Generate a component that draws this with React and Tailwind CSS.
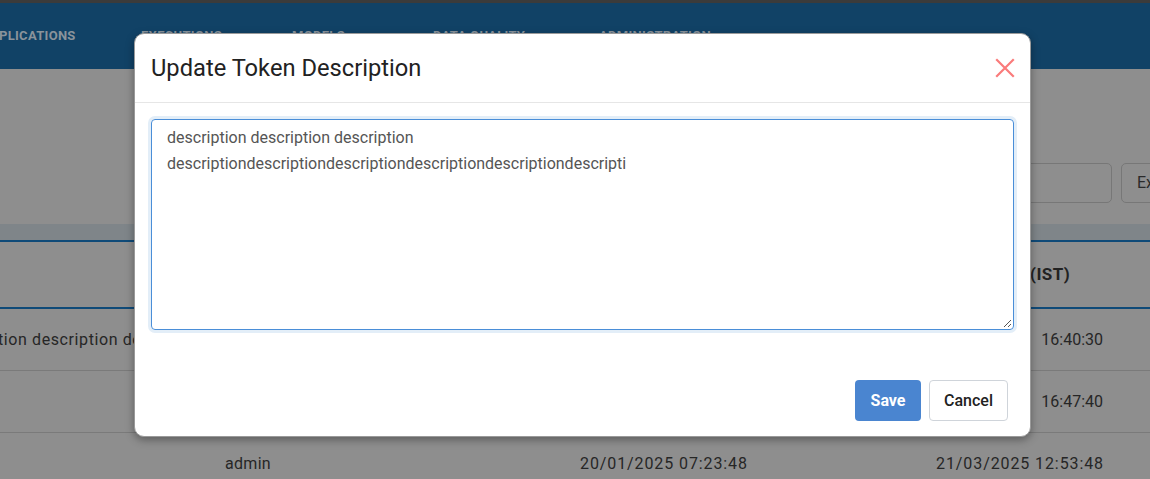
import React from "react";

export default function App() {
  const font = { fontFamily: "Roboto, 'Liberation Sans', sans-serif" };
  return (
    <div className="relative w-[1150px] h-[479px] overflow-hidden bg-[#8e8e8e]" style={font}>
      {/* top strip */}
      <div className="h-[3px] bg-[#3b3b3b]" />
      {/* navbar */}
      <div className="h-[66px] bg-[#114266] flex items-center text-[13px] font-bold text-[#8a939b] tracking-[0.3px]">
        <span className="ml-[-1px] w-[142px]">PLICATIONS</span>
        <span className="w-[151px]">EXECUTIONS</span>
        <span className="w-[141px]">MODELS ▾</span>
        <span className="w-[166px]">DATA QUALITY</span>
        <span>ADMINISTRATION</span>
      </div>
      {/* toolbar area */}
      <div className="h-[155px] relative">
        <div className="absolute left-[980px] top-[94px] w-[132px] h-[40px] border border-[#777] rounded-[5px]" />
        <div className="absolute left-[1121px] top-[94px] w-[60px] h-[40px] border border-[#777] rounded-[5px] flex items-center pl-[15px] text-[16px] text-[#2a2a2a]">Ex</div>
      </div>
      <div className="h-[16px] bg-[#7f8589]" />
      {/* table header */}
      <div className="h-[69px] border-t-2 border-b-2 border-[#0f4a78] flex items-center justify-end pr-[80px] text-[17px] font-bold text-[#222] tracking-[0.4px]">
        <span>(IST)</span>
      </div>
      {/* rows */}
      <div className="h-[62px] border-b border-[#7a7a7a] flex items-center text-[16px] text-[#262626]">
        <span className="ml-[-2px] tracking-[0.6px]">tion description description description</span>
        <span className="ml-auto mr-[47px]">16:40:30</span>
      </div>
      <div className="h-[62px] border-b border-[#7a7a7a] flex items-center text-[16px] text-[#262626]">
        <span className="ml-auto mr-[47px]">16:47:40</span>
      </div>
      <div className="h-[62px] flex items-center text-[16px] text-[#262626]">
        <span className="ml-[225px] tracking-[0.3px]">admin</span>
        <span className="ml-[309px] tracking-[0.9px]">20/01/2025 07:23:48</span>
        <span className="ml-auto mr-[46px] tracking-[0.9px]">21/03/2025 12:53:48</span>
      </div>

      {/* modal */}
      <div className="absolute left-[134px] top-[33px] w-[897px] h-[404px] bg-white rounded-[10px] border border-[#9a9a9a] shadow-[0_3px_8px_rgba(0,0,0,0.35)] flex flex-col">
        <div className="h-[69px] border-b border-[#e6e6e6] flex items-center justify-between pl-[16px] pr-[16px] pt-[2px]">
          <span className="text-[23.7px] text-[#222]">Update Token Description</span>
          <svg width="22" height="22" viewBox="0 0 22 22" className="mr-[-2px] mt-[-2px]">
            <path d="M3 3 L19 19 M19 3 L3 19" stroke="#fa7b7b" strokeWidth="2.2" strokeLinecap="square" />
          </svg>
        </div>
        <div className="px-[16px] pt-[16px]">
          <div className="h-[211px] rounded-[4px] border border-[#4a8ed8] shadow-[0_0_0_3px_#e3eef8] px-[15px] pt-[5px] text-[16px] leading-[26px] text-[#555] relative">
            <div>description description description</div>
            <div>descriptiondescriptiondescriptiondescriptiondescriptiondescripti</div>
            <svg width="10" height="10" viewBox="0 0 10 10" className="absolute right-[1px] bottom-[1px]">
              <path d="M9 2 L2 9 M9 6 L6 9" stroke="#555" strokeWidth="1" />
            </svg>
          </div>
        </div>
        <div className="flex-1 flex items-end justify-end gap-[8px] pr-[22px] pb-[15px]">
          <button className="w-[66px] h-[41px] rounded-[4px] bg-[#4a85d0] text-white font-bold text-[16px]">Save</button>
          <button className="w-[79px] h-[41px] rounded-[4px] border border-[#cfd4da] bg-white text-[#222] font-medium text-[16px]">Cancel</button>
        </div>
      </div>
    </div>
  );
}
